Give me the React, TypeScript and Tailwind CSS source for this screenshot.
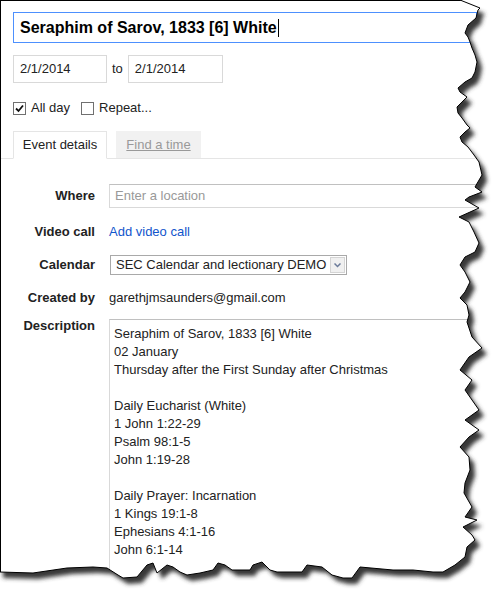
import React from "react";

const rightEdge: [number, number][] = [
  [460, 0], [480, 8], [478, 10], [476, 18], [468, 25], [465, 33], [468, 37], [470, 42],
  [472, 48], [475, 55], [477, 62], [475, 72], [472, 78], [465, 82], [458, 88], [460, 92],
  [467, 97], [462, 102], [457, 107], [458, 113], [462, 118], [467, 125], [470, 128],
  [465, 132], [460, 137], [462, 142], [468, 147], [474, 155], [479, 162], [482, 175],
  [475, 187], [482, 192], [469, 197], [465, 200], [479, 208], [459, 217], [469, 222],
  [474, 232], [479, 243], [475, 252], [465, 257], [460, 265], [465, 272], [470, 282],
  [465, 292], [460, 298], [467, 305], [469, 315], [467, 322], [472, 337], [482, 348],
  [469, 357], [460, 370], [472, 380], [465, 390], [479, 410], [465, 420], [479, 430],
  [469, 437], [460, 447], [469, 457], [470, 470], [465, 483], [464, 493], [472, 507],
  [465, 517], [477, 520], [463, 527], [472, 535], [475, 540], [467, 547], [465, 557],
  [455, 565], [443, 572],
];

const bottomEdge: [number, number][] = [
  [433, 572], [413, 570], [393, 570], [360, 567], [352, 578], [343, 578], [332, 575],
  [322, 567], [307, 565], [302, 572], [277, 572], [270, 570], [262, 562], [253, 565],
  [250, 570], [232, 570], [225, 565], [218, 563], [213, 570], [200, 573], [187, 575],
  [180, 572], [173, 567], [167, 565], [157, 573], [153, 563], [147, 565], [137, 577],
  [123, 578], [118, 575], [107, 568], [93, 567], [67, 568], [33, 573], [0, 572],
];

const edge = [...rightEdge, ...bottomEdge];
const edgeLine = edge.map((p, i) => (i === 0 ? "M" : "L") + p[0] + " " + p[1]).join(" ");
const paper = "M-2 -2 " + edge.map((p) => "L" + p[0] + " " + p[1]).join(" ") + " L-2 572 Z";

function TornEdge() {
  return (
    <svg className="absolute inset-0 pointer-events-none" width="504" height="605" viewBox="0 0 504 605">
      <defs>
        <mask id="outside">
          <rect x="0" y="0" width="504" height="605" fill="white" />
          <path d={paper} fill="black" />
        </mask>
        <filter id="blur" x="-10%" y="-10%" width="120%" height="120%">
          <feGaussianBlur stdDeviation="2" />
        </filter>
      </defs>
      <g mask="url(#outside)">
        <rect x="0" y="0" width="504" height="605" fill="white" />
        <path d={paper} fill="#383838" transform="translate(5 6)" filter="url(#blur)" />
      </g>
      <path d={edgeLine} fill="none" stroke="black" strokeWidth="1" />
    </svg>
  );
}

function Check({ checked, label }: { checked?: boolean; label: string }) {
  return (
    <div className="flex items-center">
      <span className="flex h-[13px] w-[13px] items-center justify-center border border-[#707070] bg-white">
        {checked && (
          <svg width="9" height="9" viewBox="0 0 9 9">
            <path d="M1 4.5 L3.5 7 L8 1.5" fill="none" stroke="#111" strokeWidth="1.8" />
          </svg>
        )}
      </span>
      <span className="ml-[5px]">{label}</span>
    </div>
  );
}

function Row({ label, className, labelClass = "", children }: { label: string; className: string; labelClass?: string; children: React.ReactNode }) {
  return (
    <div className={"flex " + className}>
      <div className={"w-[94px] shrink-0 text-right font-bold text-[#222] " + labelClass}>{label}</div>
      <div className="ml-[14px] flex-1">{children}</div>
    </div>
  );
}

export default function App() {
  const description = [
    "Seraphim of Sarov, 1833 [6] White",
    "02 January",
    "Thursday after the First Sunday after Christmas",
    "",
    "Daily Eucharist (White)",
    "1 John 1:22-29",
    "Psalm 98:1-5",
    "John 1:19-28",
    "",
    "Daily Prayer: Incarnation",
    "1 Kings 19:1-8",
    "Ephesians 4:1-16",
    "John 6:1-14",
  ];

  return (
    <div
      className="relative h-[605px] w-[504px] overflow-hidden bg-white text-[13px] text-[#222]"
      style={{ fontFamily: '"Liberation Sans", Arial, sans-serif' }}
    >
      <div className="h-full border-l border-t border-black">
        <div className="px-[12px] pt-[11px]">
          <div className="flex h-[31px] w-[464px] items-center border border-[#4d90fe] pl-[6px] text-[16px] font-bold text-black">
            Seraphim of Sarov, 1833 [6] White
            <span className="ml-[1px] h-[18px] w-px bg-black" />
          </div>

          <div className="mt-[12px] flex h-[28px] items-center">
            <div className="flex h-[28px] w-[94px] items-center border border-[#d9d9d9] pl-[6px]">2/1/2014</div>
            <span className="mx-[5px]">to</span>
            <div className="flex h-[28px] w-[95px] items-center border border-[#d9d9d9] pl-[6px]">2/1/2014</div>
          </div>

          <div className="mt-[17px] flex h-[16px] items-center gap-[11px]">
            <Check checked label="All day" />
            <Check label="Repeat..." />
          </div>
        </div>

        <div className="mt-[15px] flex h-[28px] items-end border-b border-[#e5e5e5] pl-[12px]">
          <div className="-mb-px flex h-[28px] w-[94px] items-center justify-center border border-b-white border-[#e5e5e5] bg-white">
            Event details
          </div>
          <div className="ml-[9px] flex h-[27px] w-[85px] items-center justify-center bg-[#f1f1f1] text-[#999] underline">
            Find a time
          </div>
        </div>

        <Row label="Where" className="mt-[25px] h-[24px] items-center">
          <div className="flex h-[24px] w-[400px] items-center border border-[#d9d9d9] border-t-[#c0c0c0] pl-[5px] text-[#999]">
            Enter a location
          </div>
        </Row>

        <Row label="Video call" className="mt-[12px] h-[24px] items-center">
          <span className="text-[#15c]">Add video call</span>
        </Row>

        <Row label="Calendar" className="mt-[9px] h-[24px] items-center">
          <div className="ml-px flex h-[20px] w-[237px] items-center border border-[#a9a9a9] pl-[5px] pr-[1px]">
            <span className="flex-1">SEC Calendar and lectionary DEMO</span>
            <span className="flex h-[16px] w-[15px] items-center justify-center border border-[#d4d4d4] bg-[#f0f0f0]">
              <svg width="7" height="5" viewBox="0 0 7 5">
                <path d="M0.5 0.5 L3.5 3.5 L6.5 0.5" fill="none" stroke="#6b7b9a" strokeWidth="1.5" />
              </svg>
            </span>
          </div>
        </Row>

        <Row label="Created by" className="mt-[9px] h-[24px] items-center">
          <span>garethjmsaunders@gmail.com</span>
        </Row>

        <Row label="Description" className="mt-[9px] items-start" labelClass="-mt-[3px]">
          <div className="h-[300px] w-[400px] border border-[#d9d9d9] border-t-[#c0c0c0] pl-[4px] pt-[5px] leading-[18px]">
            {description.map((line, i) => (
              <div key={i} className="h-[18px]">
                {line}
              </div>
            ))}
          </div>
        </Row>
      </div>
      <TornEdge />
    </div>
  );
}
